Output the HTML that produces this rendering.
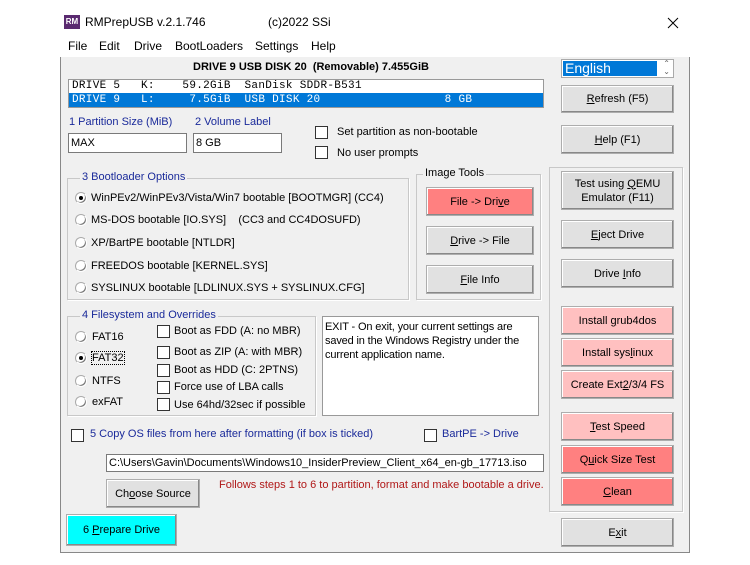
<!DOCTYPE html>
<html><head><meta charset="utf-8"><style>
*{box-sizing:border-box;margin:0;padding:0}
body{width:750px;height:565px;background:#fff;position:relative;font-family:"Liberation Sans",Arial,sans-serif;font-size:11px;color:#000;overflow:hidden}
.a{position:absolute;white-space:nowrap}
#win{position:absolute;left:60px;top:8px;width:630px;height:545px;border:1px solid #888;background:#f0f0f0}
.btn{position:absolute;background:#e1e1e1;border:1px solid #adadad;box-shadow:inset -1px -1px 0 #888,inset 1px 1px 0 #fff;text-align:center;display:flex;align-items:center;justify-content:center;font-size:11px;line-height:14px}
.pink{background:#ffc0c0}.red{background:#ff8080}.cyan{background:#00ffff}
.grp{position:absolute;border:1px solid #c8c8c8;box-shadow:1px 1px 0 #fff}
.gl{position:absolute;background:#f0f0f0;padding:0 2px;color:#1a2a9a;top:-8px;left:12px;white-space:nowrap}
.blue{color:#1a2a9a}
.cb{position:absolute;width:13px;height:13px;border:1px solid #333;background:#fff}
.rd{position:absolute;width:12px;height:12px;border-radius:50%;background:#fff;border:1px solid #aaa;border-right-color:#fff;border-bottom-color:#fff;box-shadow:-1px -1px 0 #777 inset}
.rd.on::after{content:"";position:absolute;left:3px;top:3px;width:4px;height:4px;border-radius:50%;background:#000}
.inp{position:absolute;background:#fff;border:1px solid #7a7a7a;padding-left:2px;display:flex;align-items:center}
u{text-decoration:underline}
</style></head><body>
<div id="win"></div>
<div class="a" style="left:60px;top:8px;width:630px;height:49px;background:#fff"></div>
<div class="a" style="left:64px;top:15px;width:16px;height:14px;background:#5a2a70;color:#fff;font-size:8px;font-weight:bold;text-align:center;line-height:14px">RM</div>
<div class="a" style="left:85px;top:15px;font-size:12px">RMPrepUSB v.2.1.746</div>
<div class="a" style="left:268px;top:15px;font-size:12px">(c)2022 SSi</div>
<svg class="a" style="left:667px;top:17px" width="12" height="12"><path d="M1 1L11 11M11 1L1 11" stroke="#000" stroke-width="1"/></svg>
<div class="a" style="left:68px;top:39px;font-size:12px">File</div>
<div class="a" style="left:99px;top:39px;font-size:12px">Edit</div>
<div class="a" style="left:134px;top:39px;font-size:12px">Drive</div>
<div class="a" style="left:175px;top:39px;font-size:12px">BootLoaders</div>
<div class="a" style="left:255px;top:39px;font-size:12px">Settings</div>
<div class="a" style="left:311px;top:39px;font-size:12px">Help</div>

<div class="a" style="left:193px;top:61px;font-weight:bold">DRIVE 9 USB DISK 20&nbsp; (Removable) 7.455GiB</div>
<div class="a" style="left:68px;top:79px;width:476px;height:29px;background:#fff;border:1px solid #999;font-family:'Liberation Mono',monospace;font-size:11px;letter-spacing:0.3px">
<div style="height:13px;line-height:13px;padding-left:3px;white-space:pre">DRIVE 5   K:    59.2GiB  SanDisk SDDR-B531</div>
<div style="height:14px;line-height:14px;padding-left:3px;background:#0078d7;color:#fff;white-space:pre">DRIVE 9   L:     7.5GiB  USB DISK 20                  8 GB</div>
</div>
<div class="a" style="left:561px;top:59px;width:113px;height:19px;background:#fff;border:1px solid #aaa"><div style="position:absolute;left:1px;top:1px;width:94px;height:15px;background:#0078d7;color:#fff;font-size:14px;line-height:15px;padding-left:2px">English</div><div style="position:absolute;right:3px;top:0;font-size:8px;color:#666;line-height:8px">⌃<br>⌄</div></div>
<div class="btn" style="left:561px;top:85px;width:113px;height:28px"><span><u>R</u>efresh (F5)</span></div>
<div class="a blue" style="left:69px;top:116px">1 Partition Size (MiB)</div>
<div class="a blue" style="left:195px;top:116px">2 Volume Label</div>
<div class="inp" style="left:68px;top:133px;width:119px;height:20px">MAX</div>
<div class="inp" style="left:193px;top:133px;width:89px;height:20px">8 GB</div>
<div class="cb" style="left:315px;top:126px"></div><div class="a" style="left:337px;top:126px">Set partition as non-bootable</div>
<div class="cb" style="left:315px;top:146px"></div><div class="a" style="left:337px;top:147px">No user prompts</div>
<div class="btn" style="left:561px;top:125px;width:113px;height:29px"><span><u>H</u>elp (F1)</span></div>

<div class="grp" style="left:67px;top:178px;width:342px;height:122px"><div class="gl">3 Bootloader Options</div></div>
<div class="rd on" style="left:75px;top:192px"></div><div class="a" style="left:91px;top:192px">WinPEv2/WinPEv3/Vista/Win7 bootable [BOOTMGR] (CC4)</div>
<div class="rd" style="left:75px;top:214px"></div><div class="a" style="left:91px;top:214px">MS-DOS bootable [IO.SYS]&nbsp;&nbsp;&nbsp; (CC3 and CC4DOSUFD)</div>
<div class="rd" style="left:75px;top:237px"></div><div class="a" style="left:91px;top:237px">XP/BartPE bootable [NTLDR]</div>
<div class="rd" style="left:75px;top:260px"></div><div class="a" style="left:91px;top:260px">FREEDOS bootable [KERNEL.SYS]</div>
<div class="rd" style="left:75px;top:282px"></div><div class="a" style="left:91px;top:282px">SYSLINUX bootable [LDLINUX.SYS + SYSLINUX.CFG]</div>

<div class="grp" style="left:416px;top:174px;width:125px;height:126px"><div class="gl" style="color:#000;left:6px">Image Tools</div></div>
<div class="btn red" style="left:426px;top:187px;width:108px;height:29px"><span>File -&gt; Dri<u>v</u>e</span></div>
<div class="btn" style="left:426px;top:226px;width:108px;height:29px"><span><u>D</u>rive -&gt; File</span></div>
<div class="btn" style="left:426px;top:265px;width:108px;height:29px"><span><u>F</u>ile Info</span></div>

<div class="grp" style="left:549px;top:167px;width:134px;height:345px"></div>
<div class="btn" style="left:561px;top:171px;width:113px;height:39px;background:#dcdcdc"><span>Test using <u>Q</u>EMU<br>Emulator (F11)</span></div>
<div class="btn" style="left:561px;top:220px;width:113px;height:29px"><span><u>E</u>ject Drive</span></div>
<div class="btn" style="left:561px;top:259px;width:113px;height:29px"><span>Drive <u>I</u>nfo</span></div>
<div class="btn pink" style="left:561px;top:306px;width:113px;height:29px"><span>Install <u>g</u>rub4dos</span></div>
<div class="btn pink" style="left:561px;top:338px;width:113px;height:29px"><span>Install sys<u>l</u>inux</span></div>
<div class="btn pink" style="left:561px;top:370px;width:113px;height:29px"><span>Create Ext<u>2</u>/3/4 FS</span></div>
<div class="btn pink" style="left:561px;top:412px;width:113px;height:29px"><span><u>T</u>est Speed</span></div>
<div class="btn red" style="left:561px;top:445px;width:113px;height:29px"><span>Q<u>u</u>ick Size Test</span></div>
<div class="btn red" style="left:561px;top:477px;width:113px;height:29px"><span><u>C</u>lean</span></div>
<div class="btn" style="left:561px;top:518px;width:113px;height:29px"><span>E<u>x</u>it</span></div>

<div class="grp" style="left:67px;top:316px;width:249px;height:100px"><div class="gl">4 Filesystem and Overrides</div></div>
<div class="rd" style="left:75px;top:331px"></div><div class="a" style="left:92px;top:331px">FAT16</div>
<div class="rd on" style="left:75px;top:352px"></div><div class="a" style="left:92px;top:352px;outline:1px dotted #000">FAT32</div>
<div class="rd" style="left:75px;top:375px"></div><div class="a" style="left:92px;top:375px">NTFS</div>
<div class="rd" style="left:75px;top:396px"></div><div class="a" style="left:92px;top:396px">exFAT</div>
<div class="cb" style="left:157px;top:325px"></div><div class="a" style="left:174px;top:325px">Boot as FDD (A: no MBR)</div>
<div class="cb" style="left:157px;top:346px"></div><div class="a" style="left:174px;top:346px">Boot as ZIP (A: with MBR)</div>
<div class="cb" style="left:157px;top:364px"></div><div class="a" style="left:174px;top:364px">Boot as HDD (C: 2PTNS)</div>
<div class="cb" style="left:157px;top:381px"></div><div class="a" style="left:174px;top:381px">Force use of LBA calls</div>
<div class="cb" style="left:157px;top:398px"></div><div class="a" style="left:174px;top:399px">Use 64hd/32sec if possible</div>
<div class="a" style="left:322px;top:316px;width:217px;height:100px;background:#fff;border:1px solid #999;padding:3px 2px;white-space:normal;line-height:14px;padding-right:8px;letter-spacing:-0.15px">EXIT - On exit, your current settings are saved in the Windows Registry under the current application name.</div>

<div class="cb" style="left:71px;top:429px"></div><div class="a blue" style="left:90px;top:428px">5 Copy OS files from here after formatting (if box is ticked)</div>
<div class="cb" style="left:424px;top:429px"></div><div class="a blue" style="left:442px;top:428px">BartPE -&gt; Drive</div>
<div class="inp" style="left:106px;top:454px;width:438px;height:18px">C:\Users\Gavin\Documents\Windows10_InsiderPreview_Client_x64_en-gb_17713.iso</div>
<div class="btn" style="left:106px;top:479px;width:94px;height:29px"><span>Ch<u>o</u>ose Source</span></div>
<div class="a" style="left:219px;top:479px;color:#b01818">Follows steps 1 to 6 to partition, format and make bootable a drive.</div>
<div class="btn cyan" style="left:66px;top:514px;width:111px;height:32px"><span>6 <u>P</u>repare Drive</span></div>
</body></html>
